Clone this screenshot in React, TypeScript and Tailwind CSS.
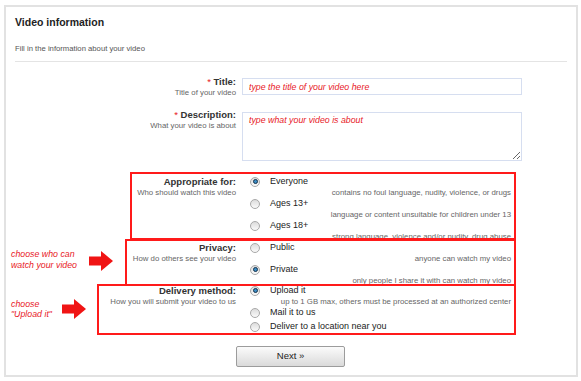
import React from "react";

function Radio({ checked }: { checked?: boolean }) {
  return (
    <span className="flex h-[10px] w-[10px] shrink-0 items-center justify-center rounded-full border border-[#a8a8a8] bg-gradient-to-b from-[#dcdcdc] to-[#fafafa]">
      {checked && (
        <span className="h-[5px] w-[5px] rounded-full border border-[#17344d] bg-[#3a8cc4]" />
      )}
    </span>
  );
}

function Option({
  label,
  desc,
  checked,
  extra,
}: {
  label: string;
  desc?: string;
  checked?: boolean;
  extra?: string;
}) {
  return (
    <div className={extra}>
      <div className="flex h-[11px] items-center">
        <Radio checked={checked} />
        <span className="ml-[10px] text-[9px] leading-[11px] text-[#222]">{label}</span>
      </div>
      {desc && (
        <div className="h-[11px] text-right text-[7.8px] leading-[11px] text-[#666]">{desc}</div>
      )}
    </div>
  );
}

function Label({ title, sub, req }: { title: string; sub: string; req?: boolean }) {
  return (
    <div className="text-right">
      <div className="text-[9.5px] font-bold leading-[12px] text-[#333]">
        {req && <span className="font-normal text-[#e8201f]">* </span>}
        {title}
      </div>
      <div className="text-[7.8px] leading-[10px] text-[#666]">{sub}</div>
    </div>
  );
}

function Arrow() {
  return (
    <svg width="24" height="20" viewBox="0 0 24 20">
      <rect x="0" y="5.5" width="13" height="9" fill="#f01414" />
      <polygon points="12,0 24,10 12,20" fill="#f01414" />
    </svg>
  );
}

export default function App() {
  return (
    <div className="h-[381px] w-[581px] bg-white pl-[4px] pt-[5px] font-['Liberation_Sans',Arial,sans-serif]">
      <div className="relative h-[372px] w-[574px] border-2 border-[#e2e2e2]">
        <div className="px-[9px] pt-[8px]">
          <div className="text-[10.5px] font-bold leading-[14px] text-[#222]">Video information</div>
          <div className="mt-[15px] text-[7.7px] leading-[10px] text-[#555]">
            Fill in the information about your video
          </div>
          <div className="mt-[7px] h-px bg-[#e4e4e4]" />
        </div>

        <div className="mt-[14px] grid grid-cols-[230px_280px] gap-x-[6px]">
          <Label req title="Title:" sub="Title of your video" />
          <input
            readOnly
            value="type the title of your video here"
            className="mt-[2px] h-[17px] w-[280px] border border-[#d6def0] px-[6px] text-[8.8px] italic text-[#e8201f] outline-none"
          />
        </div>

        <div className="mt-[11px] grid grid-cols-[230px_280px] gap-x-[6px]">
          <Label req title="Description:" sub="What your video is about" />
          <textarea
            readOnly
            value="type what your video is about"
            className="mt-[3px] h-[49px] w-[280px] border border-[#d6def0] px-[6px] py-[2px] text-[8.8px] italic leading-[11px] text-[#e8201f] outline-none"
          />
        </div>

        <div className="mt-[15px] grid grid-cols-[230px_261px] gap-x-[14px]">
          <Label title="Appropriate for:" sub="Who should watch this video" />
          <div>
            <Option checked label="Everyone" desc="contains no foul language, nudity, violence, or drugs" />
            <Option label="Ages 13+" desc="language or content unsuitable for children under 13" />
            <Option label="Ages 18+" desc="strong language, violence and/or nudity, drug abuse" />
          </div>
        </div>

        <div className="grid grid-cols-[230px_261px] gap-x-[14px]">
          <Label title="Privacy:" sub="How do others see your video" />
          <div>
            <Option label="Public" desc="anyone can watch my video" />
            <Option checked label="Private" desc="only people I share it with can watch my video" />
          </div>
        </div>

        <div className="-mt-px grid grid-cols-[230px_261px] gap-x-[14px]">
          <Label title="Delivery method:" sub="How you will submit your video to us" />
          <div>
            <Option
              checked
              label="Upload it"
              desc="up to 1 GB max, others must be processed at an authorized center"
            />
            <Option label="Mail it to us" extra="mb-[3px]" />
            <Option label="Deliver to a location near you" />
          </div>
        </div>

        <div className="mt-[10px] pl-[230px]">
          <button className="h-[21px] w-[109px] rounded-[2px] border border-[#9c9c9c] bg-gradient-to-b from-[#fbfbfb] to-[#dadada] text-[9.5px] text-[#222]">
            Next »
          </button>
        </div>

        {/* annotation boxes */}
        <div className="pointer-events-none absolute left-[124px] top-[165px] h-[68px] w-[386px] border-2 border-[#ff1a1a]" />
        <div className="pointer-events-none absolute left-[119px] top-[232px] h-[47px] w-[391px] border-2 border-[#ff1a1a]" />
        <div className="pointer-events-none absolute left-[91px] top-[277px] h-[51px] w-[419px] border-2 border-[#ff1a1a]" />

        <div className="absolute left-[5px] top-[242px] text-[8.8px] italic leading-[11px] text-[#e8201f]">
          <div>choose who can</div>
          <div>watch your video</div>
        </div>
        <div className="absolute left-[83px] top-[244px]">
          <Arrow />
        </div>

        <div className="absolute left-[5px] top-[292px] text-[8.8px] italic leading-[10px] text-[#e8201f]">
          <div>choose</div>
          <div>"Upload it"</div>
        </div>
        <div className="absolute left-[56px] top-[292px]">
          <Arrow />
        </div>
      </div>
    </div>
  );
}
